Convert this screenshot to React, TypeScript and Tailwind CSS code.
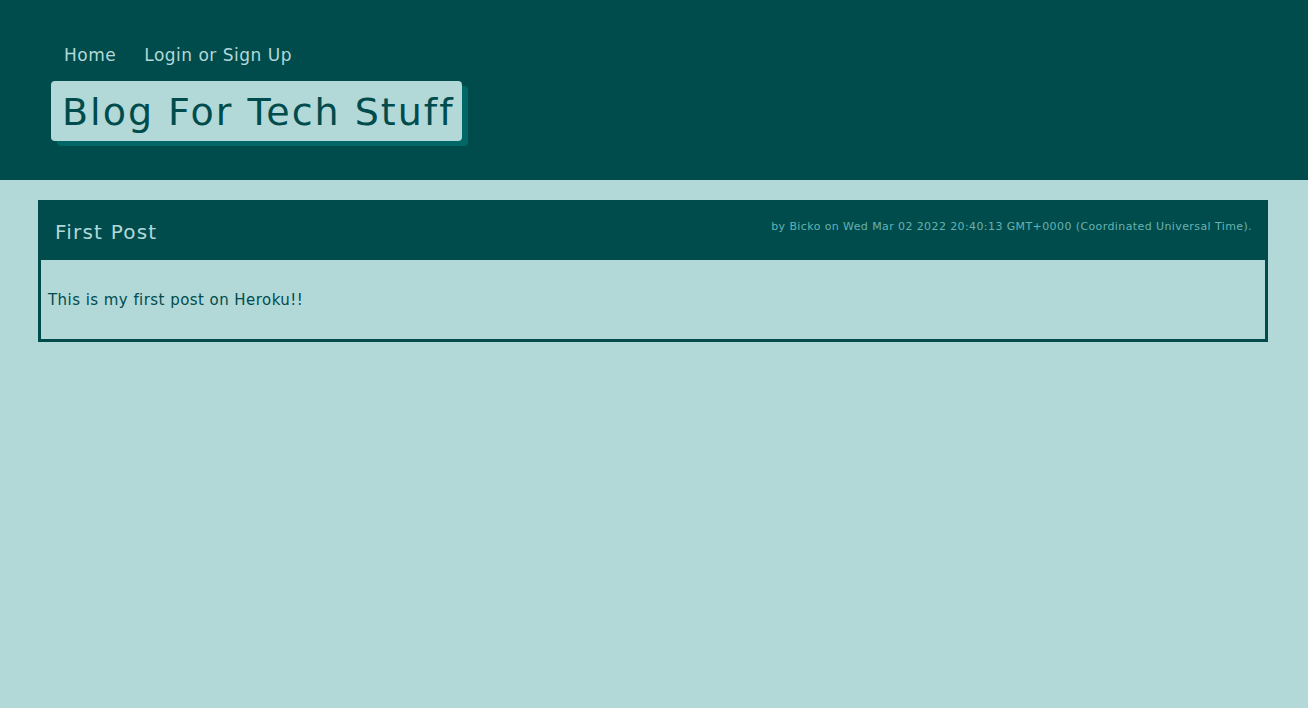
export default function App() {
  return (
    <div className="min-h-[708px] bg-[#b2d8d8]">
      <header className="h-[180px] bg-[#004c4c] pl-[51px] pt-[42px] font-['DejaVu_Sans',sans-serif]">
        <nav className="flex gap-[28px] pl-[13px] text-[17px] leading-[26px] tracking-[0.5px] text-[#b2d8d8]">
          <a>Home</a>
          <a>Login or Sign Up</a>
        </nav>
        <div className="mt-[13px] inline-block rounded-[4px] bg-[#b2d8d8] pl-[11px] pr-[7px] pt-[2px] text-[38px] leading-[58px] tracking-[2px] text-[#004c4c] shadow-[6px_5px_0_#006666]">
          Blog For Tech Stuff
        </div>
      </header>
      <main className="pl-[38px] pr-[40px] pt-[20px] font-['DejaVu_Sans',sans-serif]">
        <article className="border-[3px] border-t-0 border-[#004c4c]">
          <div className="flex h-[60px] items-center justify-between bg-[#004c4c] pl-[14px] pr-[13px]">
            <h2 className="pt-[3px] text-[20px] tracking-[1.2px] text-[#b2d8d8]">First Post</h2>
            <span className="-mt-[6px] text-[11px] tracking-[0.4px] text-[#66b2b2]">
              by Bicko on Wed Mar 02 2022 20:40:13 GMT+0000 (Coordinated Universal Time).
            </span>
          </div>
          <p className="px-[7px] pb-[29px] pt-[30px] text-[15px] leading-[20px] tracking-[0.45px] text-[#004c4c]">
            This is my first post on Heroku!!
          </p>
        </article>
      </main>
    </div>
  );
}
